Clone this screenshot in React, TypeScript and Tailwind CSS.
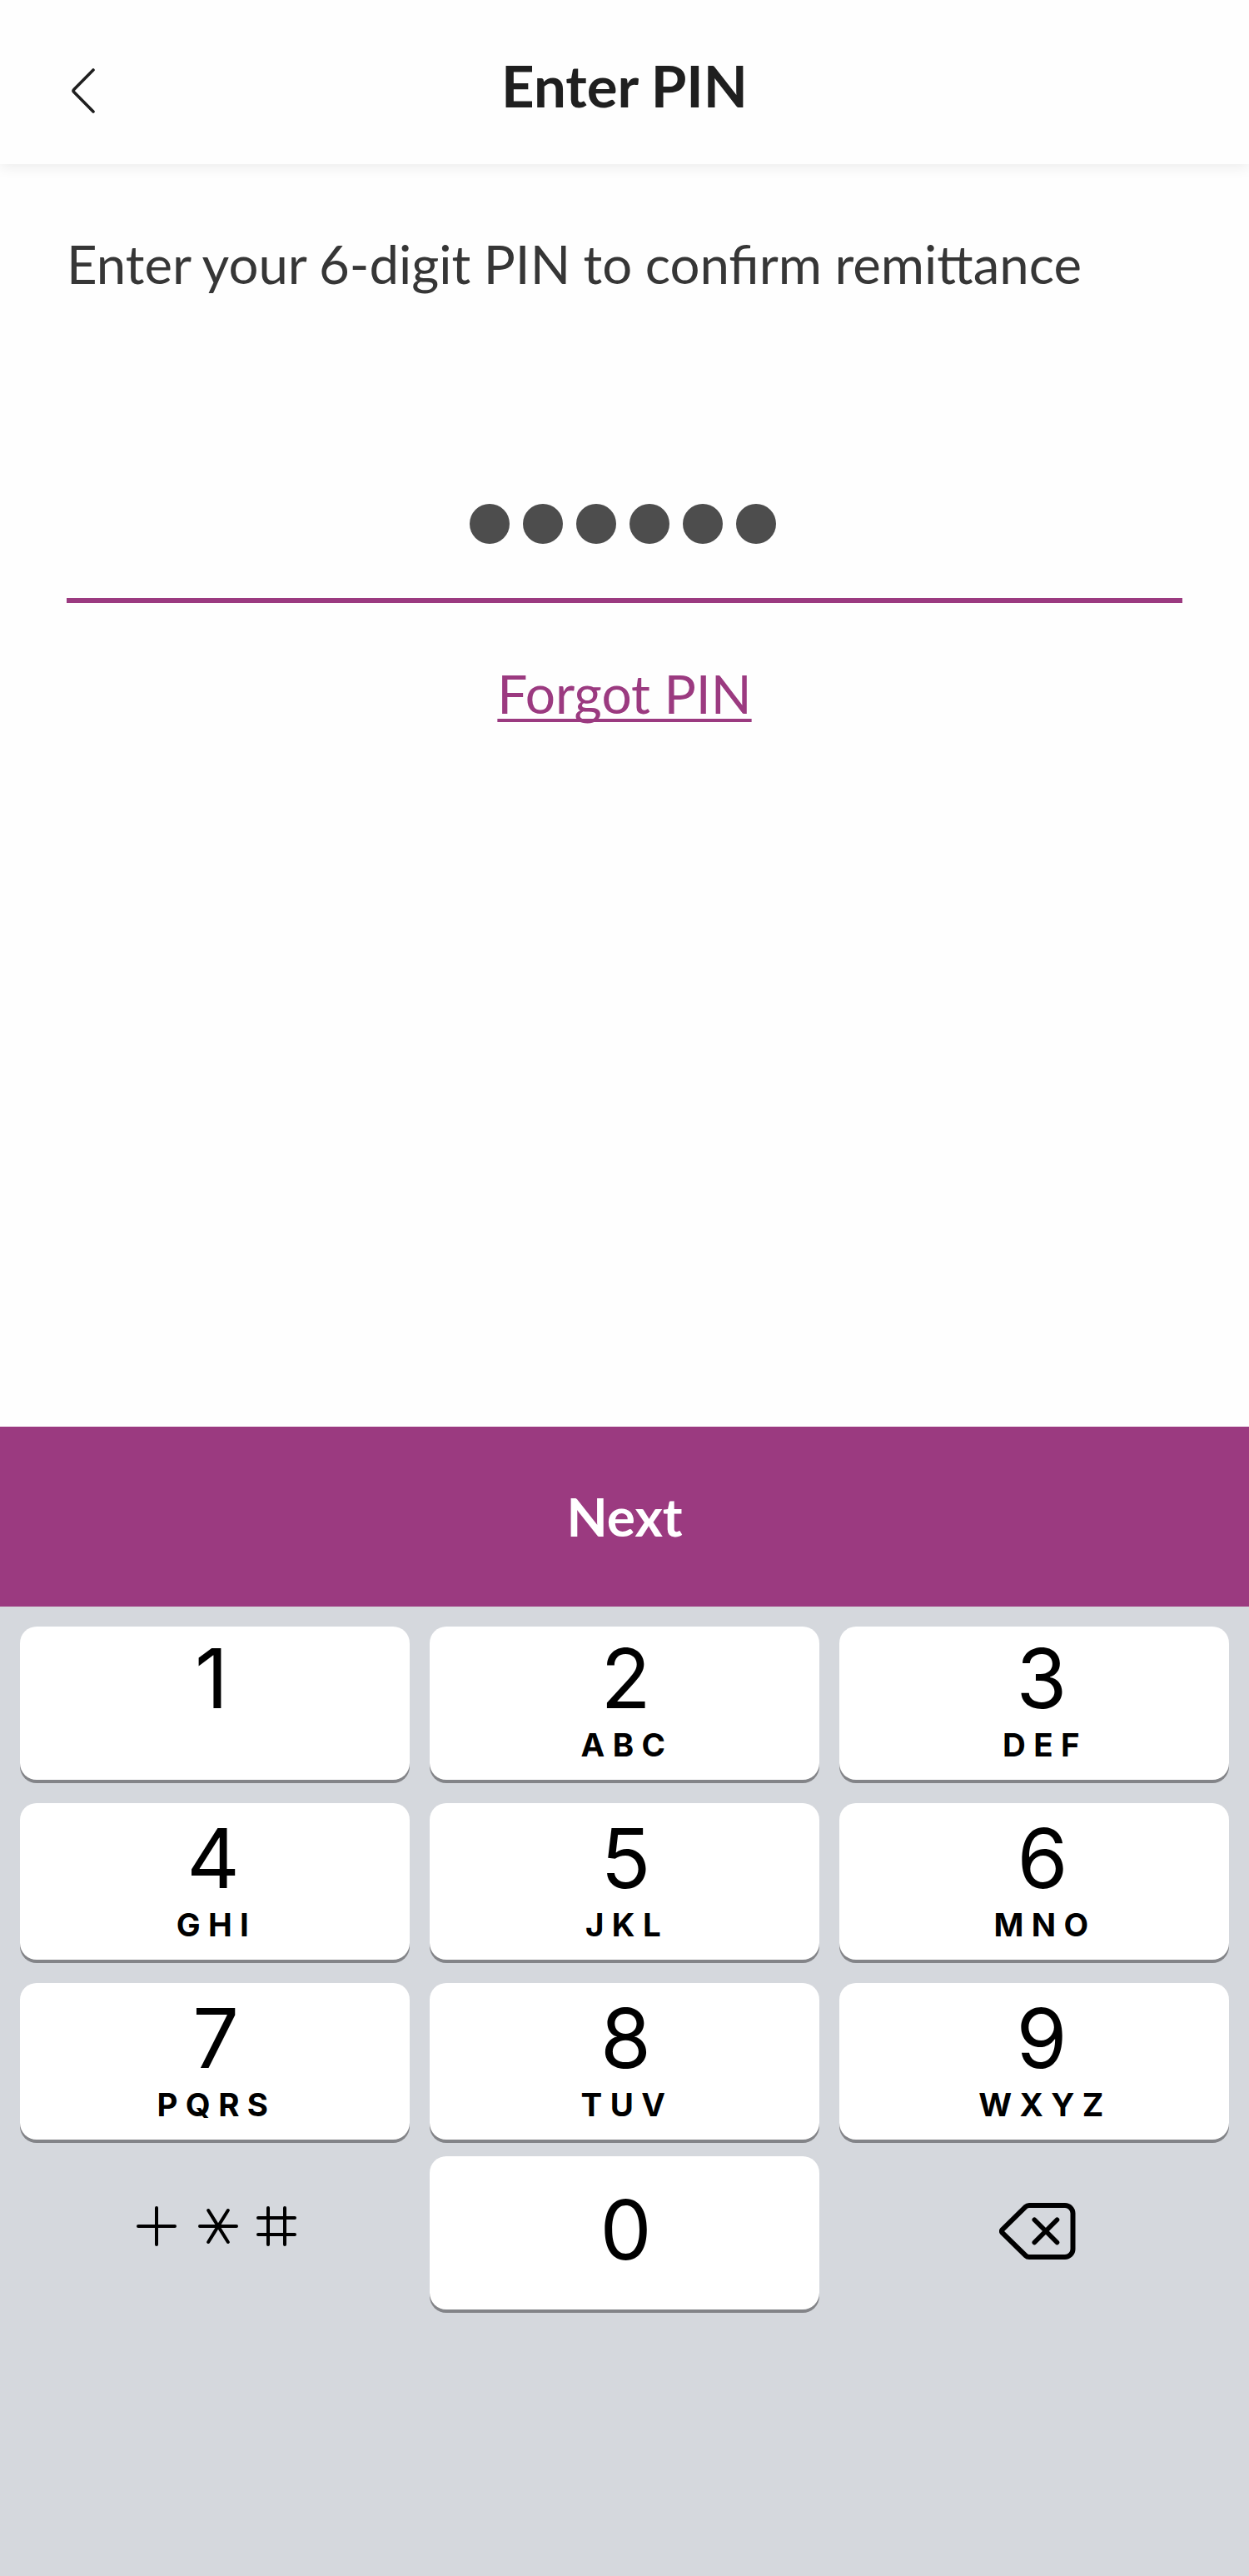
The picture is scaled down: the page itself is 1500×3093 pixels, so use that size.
import clsx from "clsx";

type KeyDef = {
  digit: string;
  letters: string;
  // optical nudge for the digit
  nudge: string;
};

const KEYS: KeyDef[] = [
  { digit: "1", letters: "", nudge: "pr-2" },
  { digit: "2", letters: "ABC", nudge: "pl-[3px]" },
  { digit: "3", letters: "DEF", nudge: "pl-[18px]" },
  { digit: "4", letters: "GHI", nudge: "pr-1" },
  { digit: "5", letters: "JKL", nudge: "pl-[3px]" },
  { digit: "6", letters: "MNO", nudge: "pl-5" },
  { digit: "7", letters: "PQRS", nudge: "pl-0.5" },
  { digit: "8", letters: "TUV", nudge: "pl-[3px]" },
  { digit: "9", letters: "WXYZ", nudge: "pl-[18px]" },
];

// Letter rows sit slightly differently in each column.
const LETTER_OFFSETS = ["pl-1", "pl-1.5", "pl-[26px]"];

const PIN_LENGTH = 6;

const keyClass =
  "flex flex-col items-center rounded-[20px] bg-white text-black shadow-[0_4px_0_#838488]";
const digitClass = "text-[98.5px] leading-[100px]";

function BackIcon() {
  return (
    <svg width="30" height="54" viewBox="0 0 30 54" fill="none">
      <path
        d="M27 2 3.8 25.4a2.3 2.3 0 0 0 0 3.2L27 52"
        stroke="#1f1f1f"
        strokeWidth="3.6"
        strokeLinecap="round"
      />
    </svg>
  );
}

function SymbolsIcon() {
  return (
    <svg width="192" height="48" viewBox="0 0 192 48" fill="none">
      <g stroke="black" strokeWidth="4" strokeLinecap="round">
        <path d="M24 2v44M2 24h44" />
        <path d="M76 24h44M86.2 5l23.6 38M109.8 5 86.2 43" />
        <path d="M158 2v44M178 2v44M146 14h44M146 34h44" />
      </g>
    </svg>
  );
}

function DeleteIcon() {
  return (
    <svg width="92" height="68" viewBox="0 0 92 68" fill="none">
      <g stroke="black" strokeWidth="6" strokeLinecap="round" strokeLinejoin="round">
        <path d="M36 3h43a9.5 9.5 0 0 1 9.5 9.5v43A9.5 9.5 0 0 1 79 65H36q-2.500 0-4.300-1.700L4 36.200q-2-2.200 0-4.400L31.700 4.700Q33.500 3 36 3Z" />
        <path d="m42.300 20.300 27.200 27.200M69.500 20.300 42.300 47.500" strokeWidth="5.6" />
      </g>
    </svg>
  );
}

function Key({ digit, letters, nudge, offset }: KeyDef & { offset: string }) {
  return (
    <button type="button" className={clsx(keyClass, "justify-end pb-[22px]")}>
      <span className={clsx(digitClass, nudge)}>{digit}</span>
      <span
        className={clsx(
          "mt-[9px] h-10 text-[38.5px] leading-10 font-[650] tracking-[9.4px]",
          offset,
        )}
      >
        {letters}
      </span>
    </button>
  );
}

function Keypad() {
  return (
    <div className="h-[1164px] bg-[#d5d8dd] px-6 pt-6 font-['Inter',sans-serif]">
      <div className="grid grid-cols-3 grid-rows-[184px_188px_188px] gap-x-6 gap-y-7">
        {KEYS.map((key, i) => (
          <Key key={key.digit} {...key} offset={LETTER_OFFSETS[i % 3]} />
        ))}
      </div>
      <div className="mt-5 grid h-[184px] grid-cols-3 gap-x-6">
        <button
          type="button"
          aria-label="Symbols"
          className="flex items-center justify-center pb-4 pl-1"
        >
          <SymbolsIcon />
        </button>
        <button type="button" className={clsx(keyClass, "justify-center pb-1.5")}>
          <span className={clsx(digitClass, "pl-[3px]")}>0</span>
        </button>
        <button
          type="button"
          aria-label="Delete"
          className="flex items-center justify-center pb-1 pl-2"
        >
          <DeleteIcon />
        </button>
      </div>
    </div>
  );
}

export default function App() {
  return (
    <div className="flex h-[3093px] w-[1500px] flex-col bg-[#fefefe] font-['Lato',sans-serif]">
      <header className="grid h-[197px] grid-cols-[1fr_auto_1fr] items-center bg-[#fefefe] px-[85px] shadow-[0_4px_16px_rgba(0,0,0,0.07)]">
        <button type="button" aria-label="Back" className="w-fit pt-[21px]">
          <BackIcon />
        </button>
        <h1 className="pt-2 text-[69px] leading-20 font-bold text-[#1f1f1f] [word-spacing:-1px]">
          Enter PIN
        </h1>
      </header>

      <main className="flex flex-1 flex-col items-center px-20 pt-20">
        <p className="w-full text-[63.5px] leading-20 text-[#363636] [word-spacing:-0.8px]">
          Enter your 6-digit PIN to confirm remittance
        </p>
        <div className="mt-[248px] flex w-full justify-center gap-4 border-b-6 border-[#9b3a80] pr-1 pb-[65px]">
          {Array.from({ length: PIN_LENGTH }, (_, i) => (
            <span key={i} className="size-12 rounded-full bg-[#4d4d4d]" />
          ))}
        </div>
        <a
          href="#"
          className="mt-[69px] text-[64px] leading-20 text-[#9b3a80] underline decoration-4 underline-offset-[6px] [text-decoration-skip-ink:none]"
        >
          Forgot PIN
        </a>
      </main>

      <button
        type="button"
        className="h-[216px] bg-[#9b3a80] text-[64px] leading-20 font-bold text-white"
      >
        Next
      </button>
      <Keypad />
    </div>
  );
}
